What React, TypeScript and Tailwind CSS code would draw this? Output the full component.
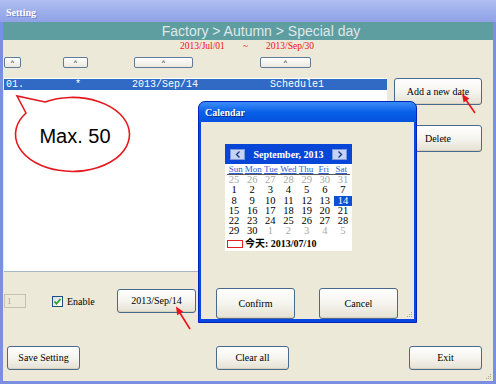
import React from "react";

const SERIF = "font-['Liberation_Serif','Noto_Sans_CJK_TC',serif]";
const MONO = "font-['Liberation_Mono',monospace]";
const SANS = "font-['Liberation_Sans',Arial,sans-serif]";

const XpButton = ({ label, className = "" }: { label: string; className?: string }) => (
  <button
    className={`flex shrink-0 items-center justify-center rounded-[3px] border border-[#49698f] bg-linear-to-b from-[#ffffff] via-[#f5f4ee] to-[#e4e1d3] text-[10px] leading-none text-black shadow-[inset_0_-1px_0_#d6d0bd] ${SERIF} ${className}`}
  >
    {label}
  </button>
);

const SortButton = ({ className }: { className: string }) => (
  <div
    className={`flex h-[11px] shrink-0 items-start justify-center rounded-[2px] border border-[#5f7a99] bg-linear-to-b from-white to-[#ebe8dc] text-[7px] leading-[9px] text-black ${SANS} ${className}`}
  >
    ^
  </div>
);

const Grip = () => (
  <svg width="6" height="6" viewBox="0 0 6 6">
    {[
      [4, 0],
      [2, 2],
      [4, 2],
      [0, 4],
      [2, 4],
      [4, 4],
    ].map(([x, y], i) => (
      <rect key={i} x={x} y={y} width="1" height="1" fill="#a9a58f" />
    ))}
  </svg>
);

const NavBtn = ({ dir }: { dir: "l" | "r" }) => (
  <div className="flex h-[11px] w-[15px] items-center justify-center border border-[#7d99dc] bg-[#c6d3f5]">
    <svg width="6" height="7" viewBox="0 0 6 7">
      <polyline
        points={dir === "l" ? "4.5,0.5 1.5,3.5 4.5,6.5" : "1.5,0.5 4.5,3.5 1.5,6.5"}
        fill="none"
        stroke="#1a3b8c"
        strokeWidth="1.4"
      />
    </svg>
  </div>
);

const weeks = [
  [25, 26, 27, 28, 29, 30, 31],
  [1, 2, 3, 4, 5, 6, 7],
  [8, 9, 10, 11, 12, 13, 14],
  [15, 16, 17, 18, 19, 20, 21],
  [22, 23, 24, 25, 26, 27, 28],
  [29, 30, 1, 2, 3, 4, 5],
];
const days = ["Sun", "Mon", "Tue", "Wed", "Thu", "Fri", "Sat"];

const CalendarWidget = () => (
  <div className={`ml-[24px] mt-[22px] flex h-[107px] w-[127px] flex-col bg-white ${SERIF}`}>
    <div className="flex h-[20px] items-center justify-between bg-[#0846d8] px-[5px]">
      <NavBtn dir="l" />
      <span className="text-[10px] font-bold text-white">September, 2013</span>
      <NavBtn dir="r" />
    </div>
    <div className="mx-[2px] grid h-[11px] grid-cols-7 border-b border-[#555555]">
      {days.map((d) => (
        <span key={d} className="text-center text-[9px] leading-[10px] text-[#2f5fd0] underline">
          {d}
        </span>
      ))}
    </div>
    <div className="grid grid-cols-7 auto-rows-[10.3px]">
      {weeks.map((w, wi) =>
        w.map((d, di) => {
          const other = wi === 0 || (wi === 5 && d < 20);
          const sel = wi === 2 && di === 6;
          return (
            <span
              key={`${wi}-${di}`}
              className={`text-center text-[10.5px] leading-[10.3px] ${
                sel ? "bg-[#0a4fd6] text-white" : other ? "text-[#a8a8a8]" : "text-black"
              }`}
            >
              {d}
            </span>
          );
        })
      )}
    </div>
    <div className="flex h-[14px] items-center pl-[2px]">
      <div className="h-[8px] w-[16px] border border-[#e02020]" />
      <span className="ml-[2px] text-[10px] font-bold text-black">今天: 2013/07/10</span>
    </div>
  </div>
);

export default function App() {
  return (
    <div className="relative flex h-[384px] w-[496px] flex-col overflow-hidden bg-[#7b8fe2]">
      {/* Title bar */}
      <div className="flex h-[22px] shrink-0 items-center bg-linear-to-b from-[#b0bff0] via-[#9eafec] to-[#90a2e6] pl-[6px] pt-[3px]">
        <span className={`text-[10px] font-bold text-white [text-shadow:1px_1px_0_#7084cc] ${SERIF}`}>
          Setting
        </span>
      </div>

      <div className="relative mx-[3px] mb-[3px] flex flex-1 flex-col bg-[#ece9d8]">
        <div
          className={`flex h-[18px] shrink-0 items-center justify-center bg-[#5f9ea0] pl-[26px] text-[14px] text-[#dde8e8] ${SANS}`}
        >
          Factory &gt; Autumn &gt; Special day
        </div>

        <div className={`flex h-[17px] shrink-0 items-start pl-[177px] text-[9.5px] leading-[12px] text-[#f01010] ${SERIF}`}>
          <span className="w-[63px]">2013/Jul/01</span>
          <span className="w-[23px]">~</span>
          <span>2013/Sep/30</span>
        </div>

        {/* Sort buttons */}
        <div className="flex h-[11px] shrink-0">
          <SortButton className="ml-[1px] w-[17px]" />
          <SortButton className="ml-[42px] w-[25px]" />
          <SortButton className="ml-[46px] w-[59px]" />
          <SortButton className="ml-[67px] w-[51px]" />
        </div>

        {/* List + side buttons */}
        <div className="mt-[10px] flex shrink-0">
          <div className="ml-[1px] h-[194px] w-[383px] border-b border-[#a5b6c9] bg-white pt-[1px]">
            <div className={`flex h-[11px] items-center bg-[#316ac5] pl-[2px] text-[10px] text-white ${MONO}`}>
              <span className="w-[69px]">01.</span>
              <span className="w-[57px]">*</span>
              <span className="w-[138px]">2013/Sep/14</span>
              <span>Schedule1</span>
            </div>
          </div>
          <div className="ml-[7px] flex flex-col">
            <XpButton label="Add a new date" className="h-[27px] w-[88px]" />
            <XpButton label="Delete" className="mt-[20px] h-[27px] w-[88px]" />
          </div>
        </div>

        {/* Controls */}
        <div className="mt-[17px] flex h-[24px] shrink-0 items-center">
          <div className={`ml-[1px] h-[14px] w-[22px] border border-[#c5c2b2] pl-[2px] text-[9px] leading-[12px] text-[#aca899] ${SERIF}`}>
            1
          </div>
          <div className="ml-[26px] flex h-[11px] w-[11px] items-center justify-center border border-[#1c5180] bg-linear-to-br from-[#dcdcd5] to-white">
            <svg width="9" height="9" viewBox="0 0 9 9">
              <path d="M1.5 4.5 L3.5 6.8 L7.5 2" fill="none" stroke="#21a121" strokeWidth="1.7" />
            </svg>
          </div>
          <span className={`w-[54px] pl-[4px] text-[10px] text-black ${SERIF}`}>Enable</span>
          <XpButton label="2013/Sep/14" className="h-[24px] w-[79px]" />
        </div>

        {/* Bottom buttons */}
        <div className="mt-[33px] flex shrink-0">
          <XpButton label="Save Setting" className="ml-[4px] h-[24px] w-[73px]" />
          <XpButton label="Clear all" className="ml-[136px] h-[24px] w-[73px]" />
          <XpButton label="Exit" className="ml-[120px] h-[24px] w-[73px]" />
        </div>

        <div className="absolute bottom-[1px] right-[1px]">
          <Grip />
        </div>

        {/* Calendar dialog */}
        <div className="absolute left-[195px] top-[79px] flex h-[222px] w-[219px] flex-col rounded-t-[7px] border border-[#0024b8] bg-[#0a46e0] px-[2px] pb-[3px]">
          <div className="-mx-[2px] flex h-[20px] shrink-0 items-center rounded-t-[6px] bg-linear-to-b from-[#3a8cf8] via-[#0860e8] to-[#0552de] pl-[6px]">
            <span className={`text-[10px] font-bold text-white [text-shadow:1px_1px_0_#0a2a8a] ${SERIF}`}>Calendar</span>
          </div>
          <div className="relative flex flex-1 flex-col bg-[#ece9d8]">
            <CalendarWidget />
            <div className="ml-[15px] mt-[37px] flex gap-[24px]">
              <XpButton label="Confirm" className="h-[31px] w-[79px]" />
              <XpButton label="Cancel" className="h-[31px] w-[79px]" />
            </div>
            <div className="absolute bottom-[1px] right-[1px]">
              <Grip />
            </div>
          </div>
        </div>
      </div>

      {/* Annotations */}
      <svg className="pointer-events-none absolute inset-0" width="496" height="384" viewBox="0 0 496 384">
        <path
          d="M26 113 L17 96 L45 102 A57 37 0 1 1 26 113 Z"
          fill="white"
          stroke="#e4181c"
          strokeWidth="1.6"
        />
        <text x="75" y="143" textAnchor="middle" fontSize="20" fill="black" fontFamily="'Liberation Sans', Arial, sans-serif">
          Max. 50
        </text>
        <line x1="475" y1="113" x2="466" y2="100" stroke="#e8141c" strokeWidth="1.6" />
        <polygon points="462,94 469.4,98.6 463.6,102.6" fill="#e8141c" />
        <line x1="190" y1="329" x2="180" y2="313" stroke="#e8141c" strokeWidth="1.6" />
        <polygon points="176,306.5 183.2,311.5 177.2,315.2" fill="#e8141c" />
      </svg>
    </div>
  );
}
